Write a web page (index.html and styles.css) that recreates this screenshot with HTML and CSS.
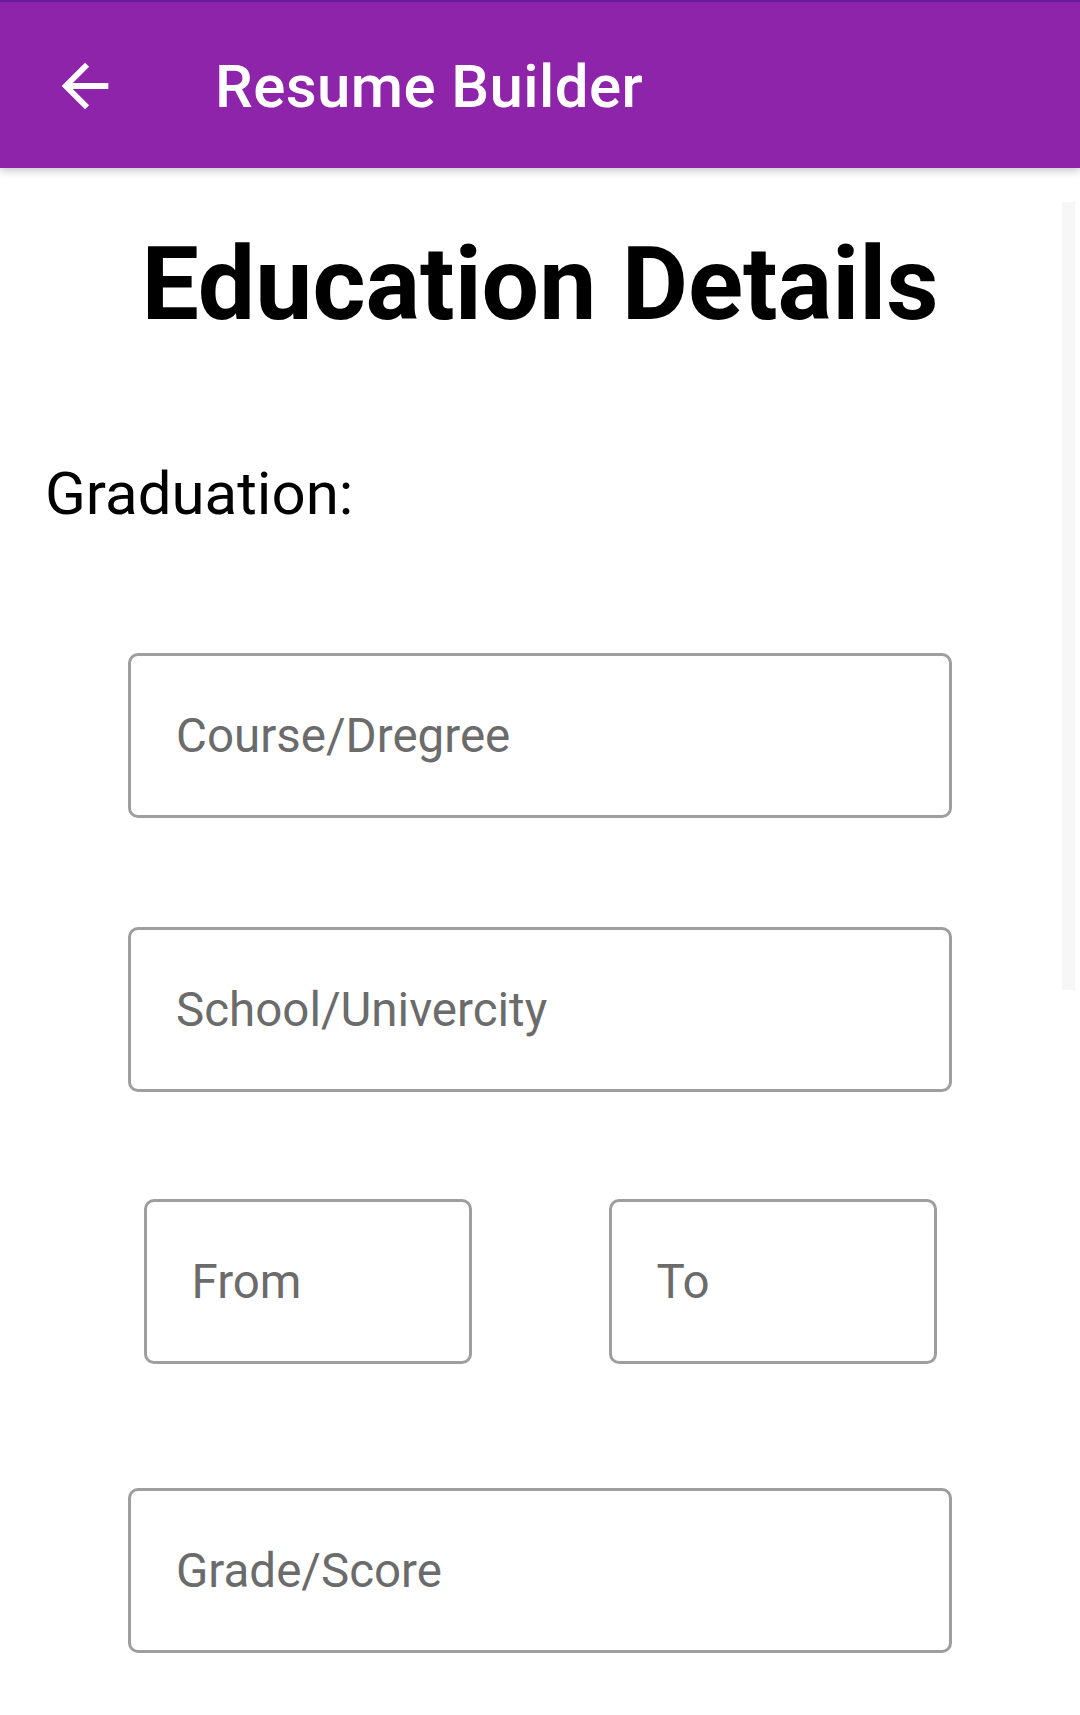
FILE: index.html
```html
<!DOCTYPE html>
<html lang="en">
<head>
<meta charset="utf-8">
<title>Resume Builder</title>
<link rel="stylesheet" href="styles.css">
</head>
<body>
<header class="appbar">
  <button class="back" aria-label="Back">
    <svg viewBox="0 0 24 24" width="70" height="70"><path d="M20 11H7.83l5.59-5.59L12 4l-8 8 8 8 1.41-1.41L7.83 13H20v-2z" fill="#fff"/></svg>
  </button>
  <h1 class="appbar-title">Resume Builder</h1>
</header>
<main class="content">
  <h2 class="page-title">Education Details</h2>
  <h3 class="section-label">Graduation:</h3>
  <div class="form">
    <div class="field field-wide"><span class="placeholder">Course/Dregree</span></div>
    <div class="field field-wide gap-a"><span class="placeholder">School/Univercity</span></div>
    <div class="row gap-b">
      <div class="field field-half"><span class="placeholder">From</span></div>
      <div class="field field-half"><span class="placeholder">To</span></div>
    </div>
    <div class="field field-wide gap-c"><span class="placeholder">Grade/Score</span></div>
  </div>
  <div class="scrollbar"></div>
</main>
</body>
</html>
```
FILE: styles.css
```css
* { box-sizing: border-box; }
html, body {
  margin: 0;
  padding: 0;
  background: #ffffff;
  font-family: Roboto, "Noto Sans", sans-serif;
  width: 1080px;
  height: 1715px;
  overflow: hidden;
}
.appbar {
  position: relative;
  z-index: 2;
  height: 168px;
  background: #8e24aa;
  border-top: 2px solid #6a1b9a;
  display: flex;
  align-items: center;
  box-shadow: 0 3px 8px rgba(0,0,0,0.22);
}
.back {
  margin-left: 50px;
  margin-top: 2px;
  width: 70px;
  height: 70px;
  padding: 0;
  border: 0;
  background: transparent;
  display: flex;
}
.appbar-title {
  margin: 4px 0 0 95px;
  color: #ffffff;
  font-size: 60px;
  font-weight: 500;
  line-height: 1;
  letter-spacing: 0.4px;
}
.content {
  position: relative;
  padding-top: 56px;
}
.page-title {
  margin: 0;
  text-align: center;
  font-size: 102px;
  line-height: 120px;
  font-weight: 700;
  color: #000;
}
.section-label {
  margin: 115px 0 0 0;
  padding-left: 45px;
  font-size: 60px;
  line-height: 70px;
  font-weight: 400;
  color: #000;
}
.form {
  margin-top: 124px;
  display: flex;
  flex-direction: column;
  align-items: center;
}
.field {
  height: 165px;
  border: 3px solid #9e9e9e;
  border-radius: 10px;
  display: flex;
  align-items: center;
  padding-left: 45px;
}
.field-wide { width: 824px; }
.field-half { width: 328px; }
.gap-a { margin-top: 109px; }
.gap-b { margin-top: 107px; }
.gap-c { margin-top: 124px; }
.row {
  display: flex;
  gap: 137px;
}
.placeholder {
  font-size: 47.5px;
  color: #6b6b6b;
}
.scrollbar {
  position: absolute;
  top: 34px;
  right: 5px;
  width: 13px;
  height: 788px;
  background: #f7f7f7;
}
```
